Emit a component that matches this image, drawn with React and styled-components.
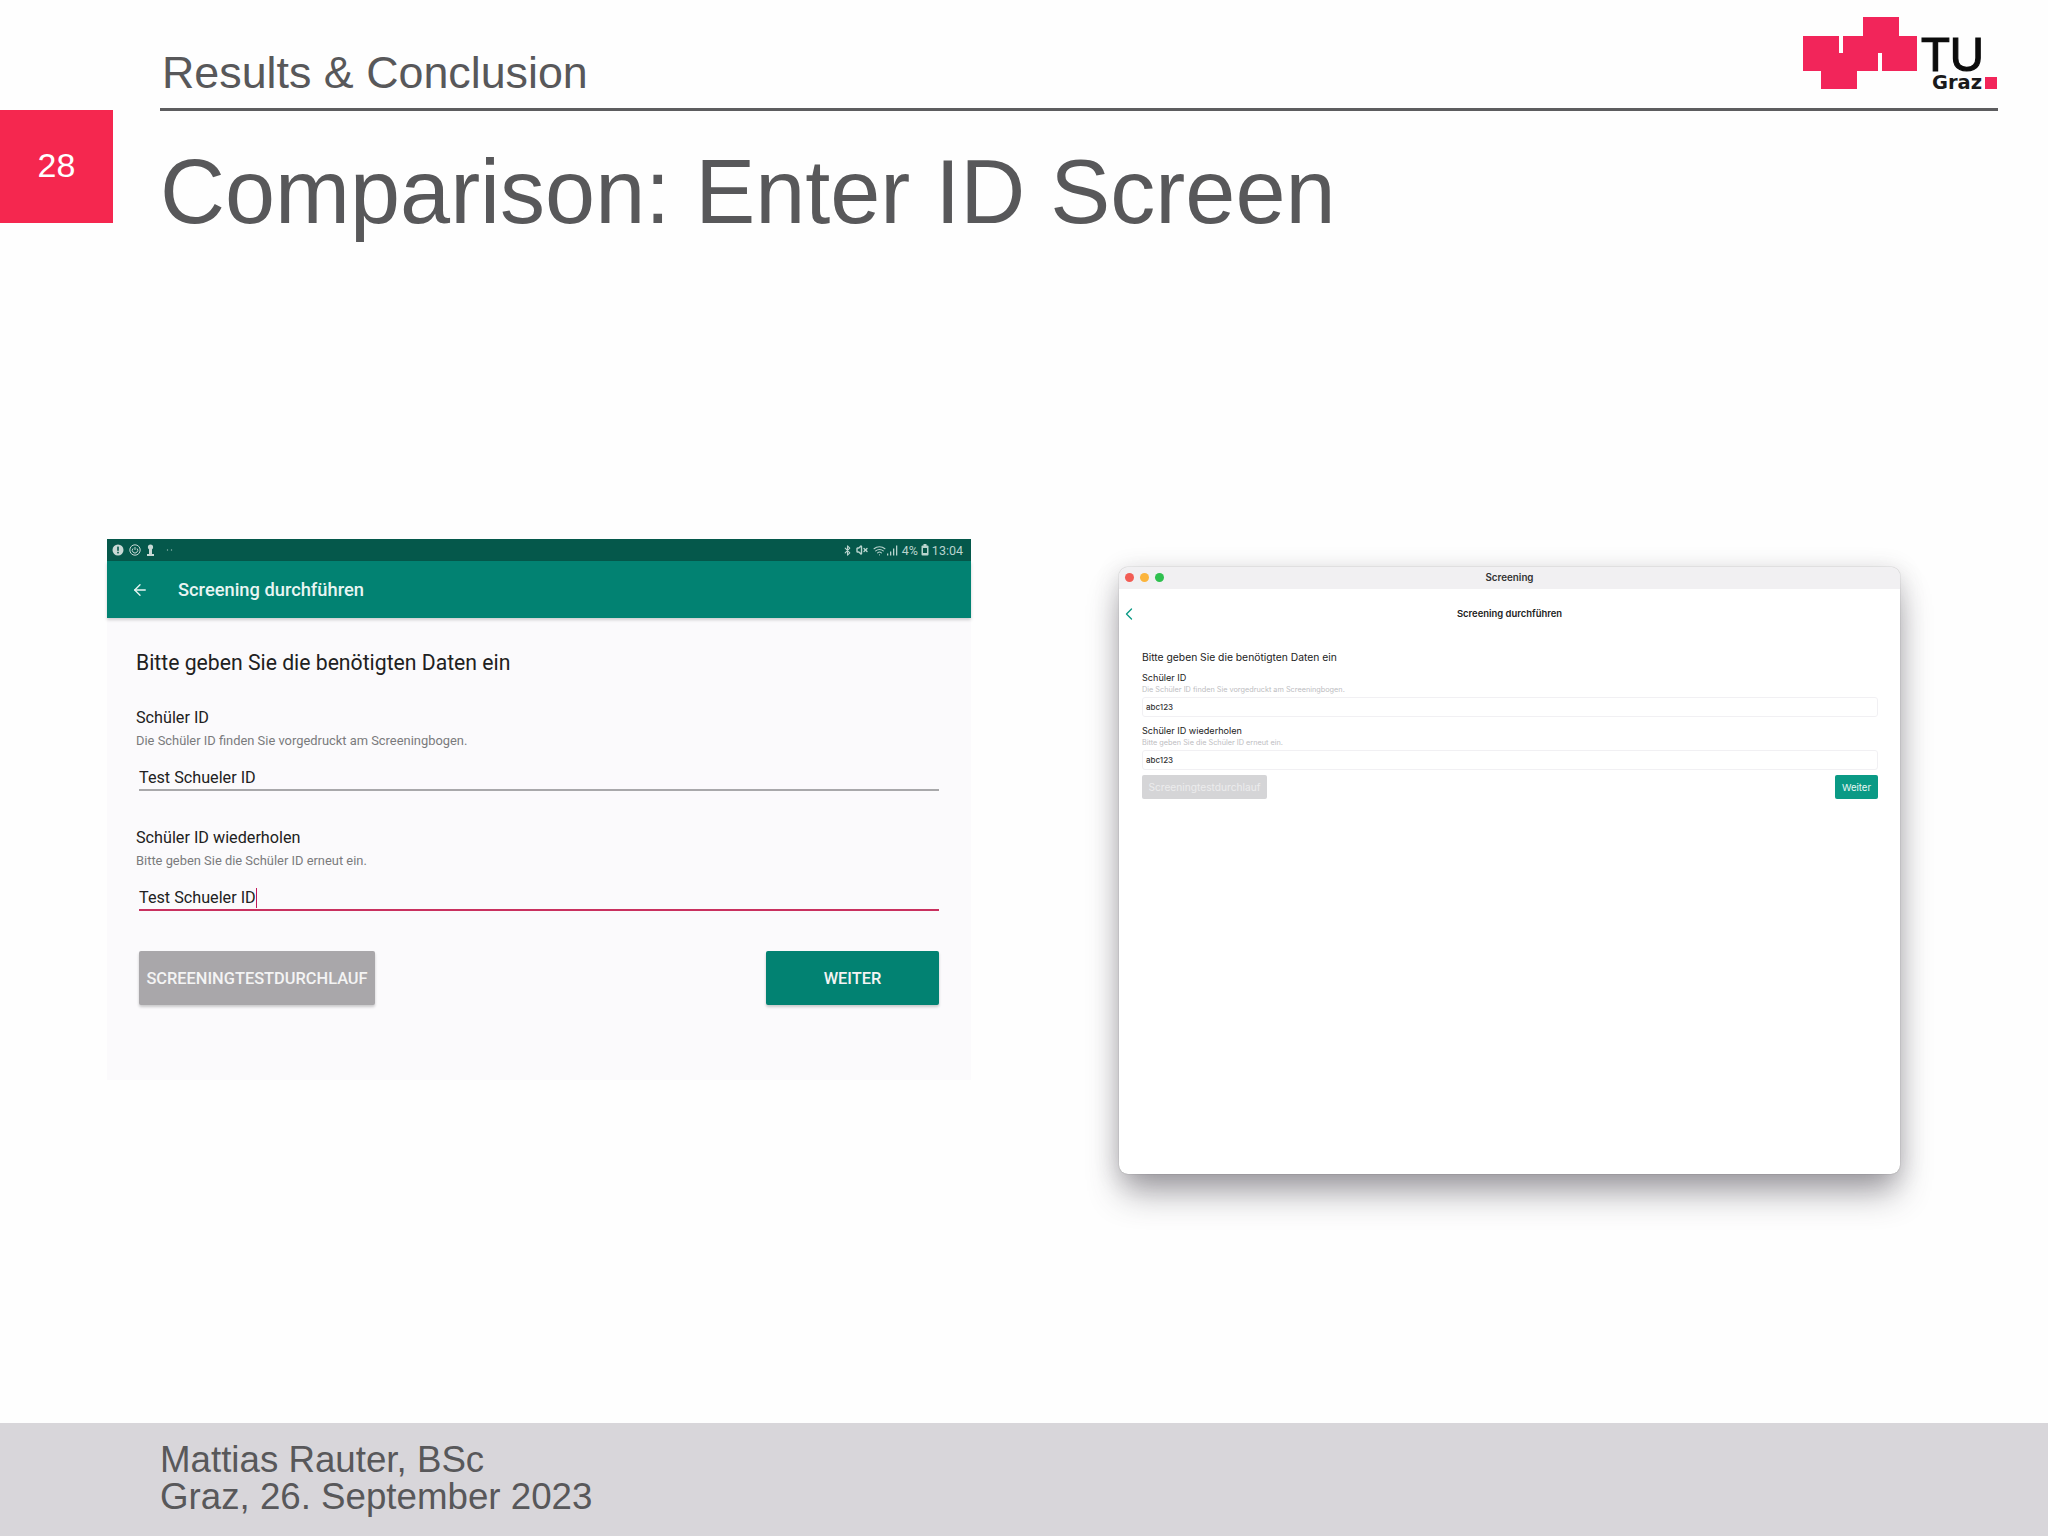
import React from "react";
import styled, { createGlobalStyle } from "styled-components";
import { ArrowLeft, ChevronLeft, Bluetooth, VolumeX, Wifi } from "lucide-react";

const Global = createGlobalStyle`
  html, body { margin: 0; padding: 0; background: #fff; }
  * { box-sizing: border-box; }
`;

const Slide = styled.div`
  width: 2048px; height: 1536px; display: flex; flex-direction: column;
  background: #fefefe; font-family: "Liberation Sans", Arial, sans-serif; color: #58585a; overflow: hidden;
`;
const Header = styled.header`
  height: 111px; margin: 0 50px 0 160px; padding-left: 2px; border-bottom: 3px solid #5d5d5f;
  display: flex; justify-content: space-between; align-items: flex-start;
`;
const Section = styled.div`
  font-size: 44.8px; line-height: 54px; margin-top: 45px;
`;
const Logo = styled.svg`
  width: 198px; height: 94px; flex: none;
`;
const TitleRow = styled.div`
  display: flex; height: 113px; margin-top: -1px;
`;
const Badge = styled.div`
  width: 113px; height: 113px; background: #f5274f; color: #fff; font-size: 34px; padding-bottom: 2px;
  display: flex; align-items: center; justify-content: center;
`;
const Title = styled.h1`
  margin: 0 0 0 47px; font-weight: 400; font-size: 90px; line-height: 106px; padding-top: 29px; white-space: nowrap;
`;
const Screens = styled.main`
  flex: 1; display: flex; align-items: flex-start; gap: 148px; padding: 316px 0 0 107px;
`;
const Android = styled.section`
  width: 864px; height: 541px; background: #fbfafc; font-family: Roboto, sans-serif; color: #212121;
`;
const StatusBar = styled.div`
  height: 22px; background: #05584b; color: #b9d4ce; font-size: 12.5px;
  display: flex; align-items: center; justify-content: space-between; padding: 0 8px 0 5px;
`;
const StatusGroup = styled.div`
  display: flex; align-items: center; gap: ${p => p.$gap || 4}px;
`;
const Toolbar = styled.div`
  height: 57px; background: #028272; color: #e8f5f2; display: flex; align-items: center; padding-left: 24px; gap: 29px;
  font-size: 18.3px; font-weight: 500; box-shadow: 0 2px 3px rgba(0,0,0,.18);
`;
const AndroidBody = styled.div`
  padding: 32px 32px 0 29px;
`;
const AndroidHeading = styled.div`
  font-size: 21.2px; line-height: 26px; margin-bottom: 32px;
`;
const AndroidLabel = styled.div`
  font-size: 16.2px; line-height: 20px;
`;
const AndroidHint = styled.div`
  font-size: 12.9px; line-height: 16px; color: #7a7a7c; margin-top: 5px;
`;
const AndroidField = styled.div`
  margin: 20px 0 37px 3px; height: 22px; font-size: 16.2px; line-height: 17px; border-bottom: 2px solid ${p => p.$active ? "#c9305f" : "#a8a8aa"};
  display: flex; align-items: flex-start;
`;
const Caret = styled.span`
  width: 1.5px; height: 20px; background: #c2185b; margin-top: -1px;
`;
const AndroidActions = styled.div`
  display: flex; justify-content: space-between; margin: 40px 0 0 3px;
`;
const AndroidButton = styled.div`
  height: 54px; width: ${p => p.$w}px; background: ${p => p.$bg}; color: #f4f4f4; font-size: 16.4px; font-weight: 500; border-radius: 2px;
  display: flex; align-items: center; justify-content: center; box-shadow: 0 2px 3px rgba(0,0,0,.2);
`;
const MacShadow = styled.div`
  border-radius: 9px; margin-top: 28px; box-shadow: 0 22px 34px -4px rgba(70,65,75,.48), 0 4px 24px rgba(70,65,75,.2);
`;
const MacWindow = styled.section`
  width: 781px; height: 607px; background: #fff; border-radius: 9px; overflow: hidden;
  font-family: Inter, sans-serif; color: #222; box-shadow: 0 0 1px rgba(0,0,0,.5);
`;
const MacTitleBar = styled.div`
  height: 22px; background: #f1f0f2; display: flex; align-items: center; font-size: 9.8px; font-weight: 600; color: #333; position: relative;
  justify-content: center; padding-bottom: 2px;
`;
const Dots = styled.div`
  position: absolute; left: 6px; top: 6px; display: flex; gap: 6px;
`;
const Dot = styled.span`
  width: 9px; height: 9px; border-radius: 50%; background: ${p => p.$c};
`;
const MacNav = styled.div`
  height: 48px; position: relative; display: flex; align-items: center; justify-content: center; font-size: 9.45px; font-weight: 600; color: #222;
`;
const MacBack = styled.span`
  position: absolute; left: 0; top: 15px; color: #0a9a85; display: flex;
`;
const MacBody = styled.div`
  padding: 13px 22px 0 23px;
`;
const MacHeading = styled.div`
  font-size: 10.3px; line-height: 14px; margin-bottom: 8px;
`;
const MacLabel = styled.div`
  font-size: 9.1px; line-height: 12px;
`;
const MacHint = styled.div`
  font-size: 7.3px; line-height: 10px; color: #bdbdbf; margin-top: 1px;
`;
const MacField = styled.div`
  height: 20px; margin: 2px 0 8px; border: 1px solid #f1f0f3; border-radius: 3px; padding-left: 3px; font-size: 8px; font-weight: 500;
  display: flex; align-items: center; color: #333;
`;
const MacActions = styled.div`
  display: flex; justify-content: space-between; margin-top: -3px;
`;
const MacButton = styled.div`
  height: 24px; width: ${p => p.$w}px; background: ${p => p.$bg}; color: ${p => p.$fg}; font-size: ${p => p.$size}px; border-radius: 2px;
  display: flex; align-items: center; justify-content: center;
`;
const Footer = styled.footer`
  height: 113px; background: #d8d6da; padding: 19px 0 0 160px; font-size: 36.7px; line-height: 36.5px; color: #58585a;
`;

const StatusLeft = () => (
  <StatusGroup $gap={5}>
    <svg width="12" height="12" viewBox="0 0 12 12"><circle cx="6" cy="6" r="5.5" fill="#c8d9d5"/><rect x="5.2" y="2.6" width="1.6" height="4.2" fill="#05584b"/><rect x="5.2" y="7.8" width="1.6" height="1.6" fill="#05584b"/></svg>
    <svg width="12" height="12" viewBox="0 0 12 12" fill="none" stroke="#c8d9d5"><circle cx="6" cy="6" r="5.2"/><path d="M6 3v3M4 4.5a2.7 2.7 0 1 0 4 0" /></svg>
    <svg width="9" height="12" viewBox="0 0 9 12"><circle cx="4.5" cy="3" r="2.6" fill="#c8d9d5"/><rect x="3" y="4" width="3" height="6" fill="#c8d9d5"/><rect x="1" y="10" width="7" height="2" fill="#c8d9d5"/></svg>
    <svg width="8" height="12" viewBox="0 0 8 12" style={{marginLeft: 6}}><circle cx="1.5" cy="6" r=".7" fill="#8fb5ad"/><circle cx="5.5" cy="6" r=".7" fill="#8fb5ad"/></svg>
  </StatusGroup>
);

const StatusRight = () => (
  <StatusGroup $gap={3}>
    <Bluetooth size={11} strokeWidth={2.4}/>
    <VolumeX size={12} strokeWidth={2.8}/>
    <Wifi size={13} strokeWidth={2} style={{marginLeft: 2}}/>
    <svg width="11" height="11" viewBox="0 0 11 11" fill="#b9d4ce" style={{marginLeft: -2}}><rect x="0" y="8.5" width="1.3" height="2"/><rect x="3" y="6.5" width="1.3" height="4"/><rect x="6" y="3.5" width="1.3" height="7"/><rect x="9" y="0.5" width="1.3" height="10"/></svg>
    <span style={{marginLeft: 1}}>4%</span>
    <svg width="8" height="12" viewBox="0 0 8 12"><rect x="0.5" y="1.5" width="7" height="10" rx="1" fill="#b9d4ce"/><rect x="2.5" y="0" width="3" height="2" fill="#b9d4ce"/><rect x="2" y="4" width="4" height="5" fill="#05584b"/></svg>
    <span>13:04</span>
  </StatusGroup>
);

export default function App() {
  return (
    <Slide>
      <Global />
      <Header>
        <Section>Results &amp; Conclusion</Section>
        <Logo viewBox="0 0 198 94">
          <path fill="#f2255a" d="M63 17H99V36H117V71H82V53H78V71H57V89H21V71H3V36H39V53H43V36H63Z"/>
          <text x="121" y="71" fontFamily="'Liberation Sans', sans-serif" fontSize="49" fill="#0c0c0c" textLength="63" lengthAdjust="spacingAndGlyphs" style={{stroke: "#0c0c0c", strokeWidth: 1.2}}>TU</text>
          <text x="132" y="89" fontFamily="'DejaVu Sans', sans-serif" fontSize="19" fontWeight="700" fill="#1a1a1a" textLength="50" lengthAdjust="spacingAndGlyphs">Graz</text>
          <rect x="185" y="77" width="12" height="12" fill="#f2255a"/>
        </Logo>
      </Header>
      <TitleRow>
        <Badge>28</Badge>
        <Title>Comparison: Enter ID Screen</Title>
      </TitleRow>
      <Screens>
        <Android>
          <StatusBar><StatusLeft/><StatusRight/></StatusBar>
          <Toolbar><ArrowLeft size={18} strokeWidth={1.8}/>Screening durchführen</Toolbar>
          <AndroidBody>
            <AndroidHeading>Bitte geben Sie die benötigten Daten ein</AndroidHeading>
            <AndroidLabel>Schüler ID</AndroidLabel>
            <AndroidHint>Die Schüler ID finden Sie vorgedruckt am Screeningbogen.</AndroidHint>
            <AndroidField>Test Schueler ID</AndroidField>
            <AndroidLabel>Schüler ID wiederholen</AndroidLabel>
            <AndroidHint>Bitte geben Sie die Schüler ID erneut ein.</AndroidHint>
            <AndroidField $active>Test Schueler ID<Caret/></AndroidField>
            <AndroidActions>
              <AndroidButton $w={236} $bg="#a9a7aa">SCREENINGTESTDURCHLAUF</AndroidButton>
              <AndroidButton $w={173} $bg="#028272">WEITER</AndroidButton>
            </AndroidActions>
          </AndroidBody>
        </Android>
        <MacShadow>
          <MacWindow>
            <MacTitleBar>
              <Dots><Dot $c="#f25c54"/><Dot $c="#fbb43c"/><Dot $c="#2fc04f"/></Dots>
              Screening
            </MacTitleBar>
            <MacNav>
              <MacBack><ChevronLeft size={20} strokeWidth={1.6}/></MacBack>
              Screening durchführen
            </MacNav>
            <MacBody>
              <MacHeading>Bitte geben Sie die benötigten Daten ein</MacHeading>
              <MacLabel>Schüler ID</MacLabel>
              <MacHint>Die Schüler ID finden Sie vorgedruckt am Screeningbogen.</MacHint>
              <MacField>abc123</MacField>
              <MacLabel>Schüler ID wiederholen</MacLabel>
              <MacHint>Bitte geben Sie die Schüler ID erneut ein.</MacHint>
              <MacField>abc123</MacField>
              <MacActions>
                <MacButton $w={125} $size={10.2} $bg="#d5d5d7" $fg="#ececed">Screeningtestdurchlauf</MacButton>
                <MacButton $w={43} $size={9.6} $bg="#0a9a85" $fg="#e9f7f4">Weiter</MacButton>
              </MacActions>
            </MacBody>
          </MacWindow>
        </MacShadow>
      </Screens>
      <Footer>Mattias Rauter, BSc<br/>Graz, 26. September 2023</Footer>
    </Slide>
  );
}
